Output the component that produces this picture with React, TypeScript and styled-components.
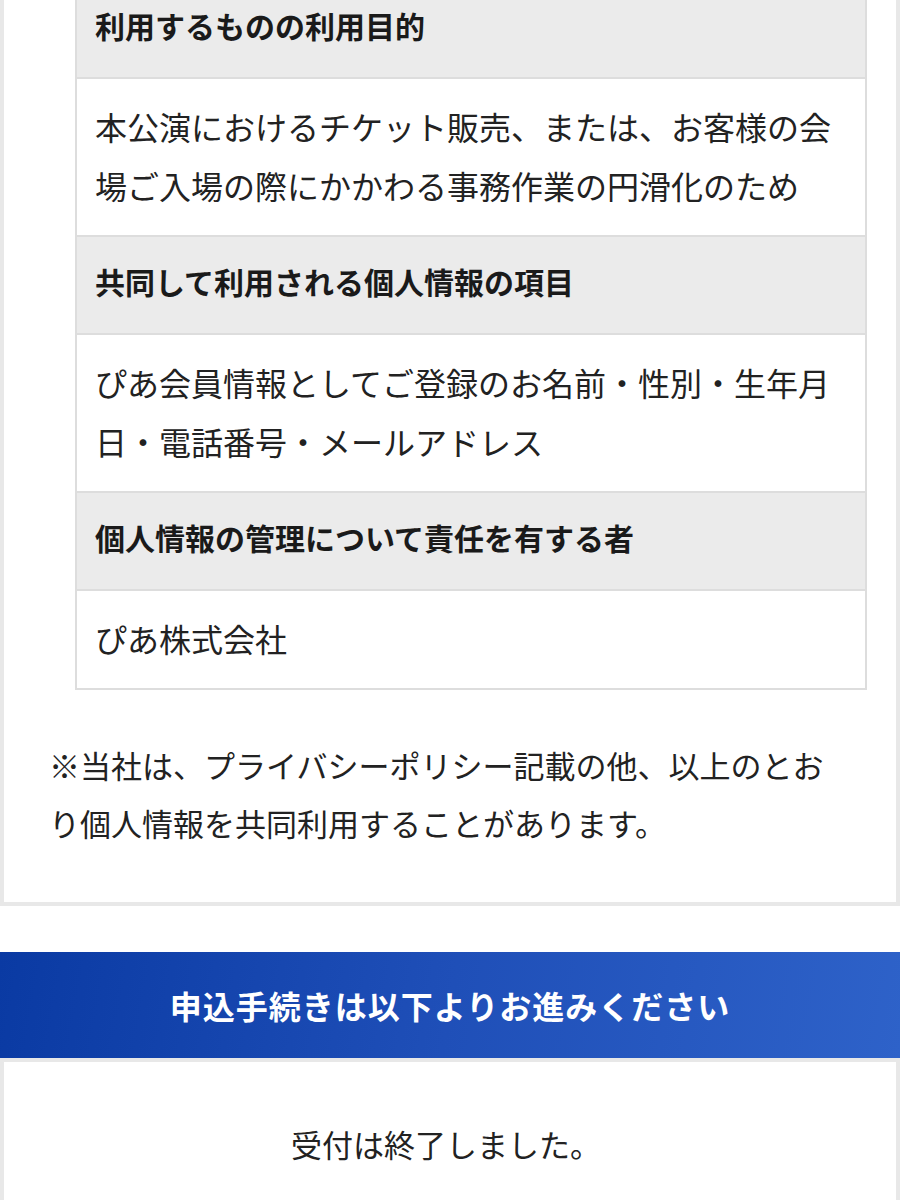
import React from 'react';
import styled, { createGlobalStyle } from 'styled-components';

const GlobalStyle = createGlobalStyle`
  html, body {
    margin: 0;
    padding: 0;
    background: #ffffff;
  }
  body {
    font-family: "Noto Sans CJK JP", "Noto Sans", sans-serif;
    color: #222222;
  }
`;

const Page = styled.div`
  width: 900px;
  overflow: hidden;
`;

const Card = styled.section<{ $top?: boolean }>`
  border: 4px solid #e8e8e8;
  border-top-width: ${({ $top }) => ($top ? '0' : '4px')};
  background: #ffffff;
  margin-top: ${({ $top }) => ($top ? '-61px' : '0')};
  padding: ${({ $top }) => ($top ? '40px 0 50px' : '0')};
`;

const InfoTable = styled.div`
  margin: 0 29px 0 71px;
  border: 2px solid #dddddd;
  display: flex;
  flex-direction: column;
`;

const HeadRow = styled.div`
  background: #ebebeb;
  padding: 21px 18px 29px;
  font-size: 30px;
  line-height: 46px;
  font-weight: 700;
  color: #1a1a1a;
  border-bottom: 2px solid #dddddd;
`;

const BodyRow = styled.div<{ $last?: boolean }>`
  background: #ffffff;
  padding: 18px 18px 20px;
  font-size: 32px;
  line-height: 59px;
  color: #222222;
  border-bottom: ${({ $last }) => ($last ? 'none' : '2px solid #dddddd')};
`;

const Note = styled.p`
  margin: 46px 50px 0 45px;
  font-size: 31px;
  line-height: 58px;
  color: #222222;
`;

const Banner = styled.h2`
  margin: 46px 0 0;
  height: 106px;
  display: flex;
  align-items: center;
  justify-content: center;
  background: linear-gradient(100deg, #0a3aa3 0%, #1f4fb8 50%, #2e62c9 100%);
  color: #ffffff;
  font-size: 32px;
  font-weight: 700;
  letter-spacing: 1px;
`;

const ClosedBox = styled.div`
  padding: 59px 0 40px;
  display: flex;
  justify-content: center;
`;

const ClosedText = styled.p`
  margin: 0 8px 0 0;
  font-size: 31px;
  line-height: 46px;
  color: #222222;
`;

const rows = [
  {
    head: '利用するものの利用目的',
    body: '本公演におけるチケット販売、または、お客様の会場ご入場の際にかかわる事務作業の円滑化のため',
  },
  {
    head: '共同して利用される個人情報の項目',
    body: 'ぴあ会員情報としてご登録のお名前・性別・生年月日・電話番号・メールアドレス',
  },
  {
    head: '個人情報の管理について責任を有する者',
    body: 'ぴあ株式会社',
  },
];

const App = () => (
  <>
    <GlobalStyle />
    <Page>
      <Card $top>
        <InfoTable>
          {rows.map((row, i) => (
            <React.Fragment key={row.head}>
              <HeadRow>{row.head}</HeadRow>
              <BodyRow $last={i === rows.length - 1}>{row.body}</BodyRow>
            </React.Fragment>
          ))}
        </InfoTable>
        <Note>
          ※当社は、プライバシーポリシー記載の他、以上のとおり個人情報を共同利用することがあります。
        </Note>
      </Card>
      <Banner>申込手続きは以下よりお進みください</Banner>
      <Card>
        <ClosedBox>
          <ClosedText>受付は終了しました。</ClosedText>
        </ClosedBox>
      </Card>
    </Page>
  </>
);

export default App;
